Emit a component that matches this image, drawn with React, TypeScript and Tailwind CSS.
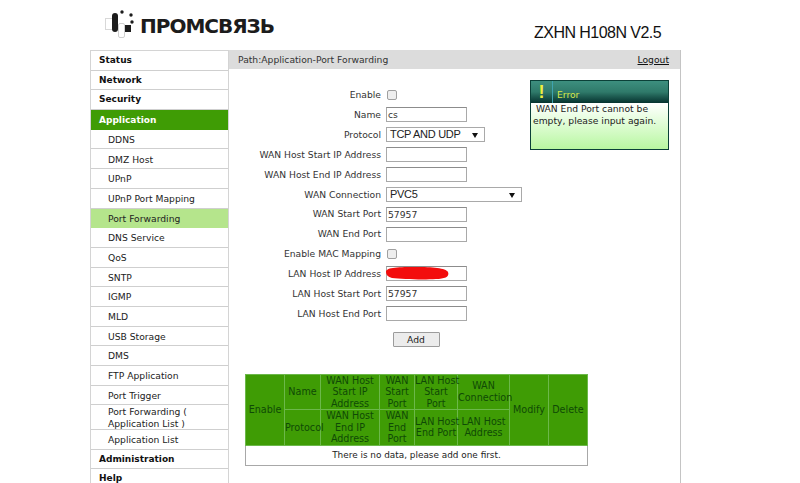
import React from 'react';

const FONT = "font-['DejaVu_Sans',sans-serif]";

const menu: { label: string; kind: 'top' | 'active' | 'sub' | 'current'; h: string }[] = [
  { label: 'Status', kind: 'top', h: 'h-[19.7px]' },
  { label: 'Network', kind: 'top', h: 'h-[19.7px]' },
  { label: 'Security', kind: 'top', h: 'h-[19.7px]' },
  { label: 'Application', kind: 'active', h: 'h-[19.7px]' },
  { label: 'DDNS', kind: 'sub', h: 'h-[19.7px]' },
  { label: 'DMZ Host', kind: 'sub', h: 'h-[19.7px]' },
  { label: 'UPnP', kind: 'sub', h: 'h-[19.7px]' },
  { label: 'UPnP Port Mapping', kind: 'sub', h: 'h-[19.7px]' },
  { label: 'Port Forwarding', kind: 'current', h: 'h-[19.7px]' },
  { label: 'DNS Service', kind: 'sub', h: 'h-[19.7px]' },
  { label: 'QoS', kind: 'sub', h: 'h-[19.7px]' },
  { label: 'SNTP', kind: 'sub', h: 'h-[19.7px]' },
  { label: 'IGMP', kind: 'sub', h: 'h-[19.7px]' },
  { label: 'MLD', kind: 'sub', h: 'h-[19.7px]' },
  { label: 'USB Storage', kind: 'sub', h: 'h-[19.7px]' },
  { label: 'DMS', kind: 'sub', h: 'h-[19.7px]' },
  { label: 'FTP Application', kind: 'sub', h: 'h-[19.7px]' },
  { label: 'Port Trigger', kind: 'sub', h: 'h-[19.7px]' },
  { label: 'Port Forwarding ( Application List )', kind: 'sub', h: 'h-[24.5px]' },
  { label: 'Application List', kind: 'sub', h: 'h-[19.7px]' },
  { label: 'Administration', kind: 'top', h: 'h-[19.7px]' },
  { label: 'Help', kind: 'top', h: 'h-[19.7px]' },
];

const Sidebar = () => (
  <div className="w-[139px] shrink-0 border-x border-t border-[#d4d4d4]">
    {menu.map((m) => {
      let cls = 'pl-[17px] text-[9.2px] text-[#222] bg-white border-b border-[#cfcfcf]';
      if (m.kind === 'top') cls = 'pl-[8px] text-[9px] font-bold text-[#111] bg-white border-b border-[#cfcfcf]';
      if (m.kind === 'active') cls = 'pl-[8px] text-[9px] font-bold text-white bg-[#3f9c05]';
      if (m.kind === 'current') cls = 'pl-[17px] text-[9.2px] text-[#222] bg-[#b5e58c]';
      return (
        <div key={m.label} className={`${m.h} flex items-center pr-4 pt-[1px] leading-[11.5px] ${cls}`}>
          {m.label}
        </div>
      );
    })}
  </div>
);

const Row = ({ label, children }: { label: string; children: React.ReactNode }) => (
  <div className="flex h-[19.9px] items-center">
    <div className="w-[157px] pr-[5px] text-right text-[9.2px] text-[#333]">{label}</div>
    <div className="relative flex items-center">{children}</div>
  </div>
);

const Text = ({ value = '' }: { value?: string }) => (
  <input
    readOnly
    value={value}
    className="h-[15px] w-[81px] border border-[#a9a9a9] border-t-[#8c8c8c] bg-white px-[1px] text-[9.2px] text-[#333] outline-none"
  />
);

const Check = () => (
  <span className="ml-[1px] h-[10px] w-[10px] rounded-[2px] border border-[#a0a0a0] bg-[#eeeeee]" />
);

const Select = ({ value, w }: { value: string; w: string }) => (
  <div className={`relative flex h-[15px] items-center border border-[#a9a9a9] bg-white pl-[3px] font-['Liberation_Sans',sans-serif] text-[11px] tracking-[-0.3px] text-[#222] ${w}`}>
    {value}
    <svg className="absolute right-[6px] top-[5px] h-[5px] w-[6px]" viewBox="0 0 6 5">
      <path d="M0 0h6L3 5z" fill="#111" />
    </svg>
  </div>
);

const Form = () => (
  <div className="w-[301px] shrink-0 pt-[16px]">
    <Row label="Enable"><Check /></Row>
    <Row label="Name"><Text value="cs" /></Row>
    <Row label="Protocol"><Select value="TCP AND UDP" w="w-[99px]" /></Row>
    <Row label="WAN Host Start IP Address"><Text /></Row>
    <Row label="WAN Host End IP Address"><Text /></Row>
    <Row label="WAN Connection"><Select value="PVC5" w="w-[136px]" /></Row>
    <Row label="WAN Start Port"><Text value="57957" /></Row>
    <Row label="WAN End Port"><Text /></Row>
    <Row label="Enable MAC Mapping"><Check /></Row>
    <Row label="LAN Host IP Address">
      <Text />
      {/* red scribble hiding the address */}
      <svg className="absolute left-0 top-0 h-[14px] w-[64px]" viewBox="0 0 64 14">
        <path d="M0 6C0 1 14 1 30 1C46 1 60 2 62 6C64 11 58 13 50 13C36 14 16 13 6 12C2 11 0 9 0 6Z" fill="#f30d0d" />
      </svg>
    </Row>
    <Row label="LAN Host Start Port"><Text value="57957" /></Row>
    <Row label="LAN Host End Port"><Text /></Row>
    <div className="flex justify-center pl-[73px] pt-[8px]">
      <button className="h-[15px] w-[47px] rounded-[1px] border border-[#9c9c9c] bg-[#ececec] text-[9.2px] leading-none text-[#222]">
        Add
      </button>
    </div>
  </div>
);

const ErrorBox = () => (
  <div className="mt-[11px] h-[70px] w-[139px] border border-[#0b4038]">
    <div className="flex h-[22px] bg-gradient-to-b from-[#3d8f7f] via-[#2f7a6a] to-[#06332f]">
      <div className="flex w-[22px] items-center justify-center border-r border-[#3fa3b0] font-['Liberation_Sans',sans-serif] text-[18px] font-bold text-[#efef3c]">
        !
      </div>
      <div className="pl-[4px] pt-[7px] text-[9.2px] leading-[14px] text-[#d8e84a]">Error</div>
    </div>
    <div className="h-[46px] bg-gradient-to-b from-white to-[#b8f7a0] pl-[2px] text-[9.2px] leading-[12px] text-[#222]">
      &nbsp;WAN End Port cannot be empty, please input again.
    </div>
  </div>
);

const cell = 'border border-[#6cb84a] bg-[#3f9c05] text-center align-middle font-normal text-[#0f4a06] leading-[11.5px] p-0 whitespace-nowrap';

const DataTable = () => (
  <table className="ml-[16px] mt-[27px] w-[342px] table-fixed border-collapse text-[9.6px]">
    <colgroup>
      <col className="w-[39px]" />
      <col className="w-[36px]" />
      <col className="w-[59px]" />
      <col className="w-[35px]" />
      <col className="w-[43px]" />
      <col className="w-[52px]" />
      <col className="w-[39px]" />
      <col className="w-[39px]" />
    </colgroup>
    <tbody>
      <tr className="h-[34.5px]">
        <td rowSpan={2} className={cell}>Enable</td>
        <td className={cell}>Name</td>
        <td className={cell}>WAN Host<br />Start IP<br />Address</td>
        <td className={cell}>WAN<br />Start<br />Port</td>
        <td className={cell}>LAN Host<br />Start<br />Port</td>
        <td className={cell}>WAN<br />Connection</td>
        <td rowSpan={2} className={cell}>Modify</td>
        <td rowSpan={2} className={cell}>Delete</td>
      </tr>
      <tr className="h-[34.5px]">
        <td className={cell}>Protocol</td>
        <td className={cell}>WAN Host<br />End IP<br />Address</td>
        <td className={cell}>WAN<br />End<br />Port</td>
        <td className={cell}>LAN Host<br />End Port</td>
        <td className={cell}>LAN Host<br />Address</td>
      </tr>
      <tr>
        <td colSpan={8} className="h-[20px] border border-[#a8a8a8] bg-white p-0 text-center text-[8.9px] leading-[11px] text-[#222]">
          There is no data, please add one first.
        </td>
      </tr>
    </tbody>
  </table>
);

export default function App() {
  return (
    <div className={`h-[483px] w-[800px] overflow-hidden bg-white ${FONT}`}>
      <div className="flex h-[50px] items-start pl-[90px]">
        <div className="flex items-center pl-[15px] pt-[10px]">
          <svg className="h-[28px] w-[33px]" viewBox="0 0 33 28">
            <rect x="0.5" y="8.5" width="7" height="11" fill="#fff" stroke="#d8d8d8" />
            <rect x="13.5" y="13.5" width="6" height="14" rx="1.5" fill="#fff" stroke="#d0d0d0" />
            <rect x="7" y="3" width="6" height="19" rx="3" fill="#1c1c1c" />
            <circle cx="17" cy="2" r="1.7" fill="#1c1c1c" />
            <circle cx="26" cy="5" r="1.7" fill="#1c1c1c" />
            <circle cx="27" cy="12" r="1.7" fill="#1c1c1c" />
            <rect x="20" y="15" width="6" height="7" fill="#1c1c1c" />
          </svg>
          <span className="ml-[2px] mt-[3px] text-[20px] leading-none font-bold tracking-[-1px] text-[#1c1c1c]">ПРОМСВЯЗЬ</span>
        </div>
        <div className="ml-auto mr-[139px] pt-[23px] font-['Liberation_Sans',sans-serif] text-[16px] leading-[20px] tracking-[-0.55px] text-[#111]">
          ZXHN H108N V2.5
        </div>
      </div>
      <div className="flex pl-[90px]">
        <Sidebar />
        <div className="w-[452px] shrink-0 border-r border-[#c4c4c4]">
          <div className="flex h-[19px] items-center justify-between bg-[#dcdcdc] pl-[9px] pr-[11px] text-[9.2px] text-[#333]">
            <span>Path:Application-Port Forwarding</span>
            <span className="text-[#111] underline">Logout</span>
          </div>
          <div className="flex">
            <Form />
            <ErrorBox />
          </div>
          <DataTable />
        </div>
      </div>
    </div>
  );
}
